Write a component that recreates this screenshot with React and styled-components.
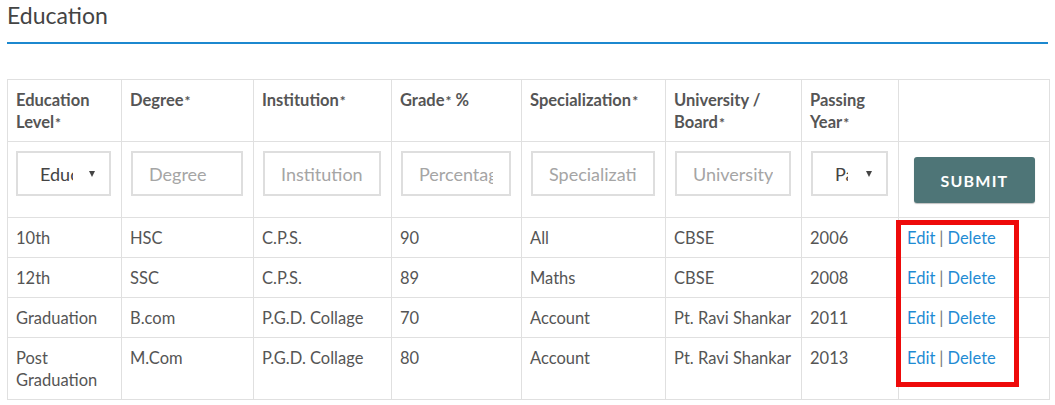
import React from 'react'
import styled, { createGlobalStyle } from 'styled-components'

const GlobalStyle = createGlobalStyle`
  body {
    margin: 0;
    background: #fff;
    font-family: Lato, "Open Sans", sans-serif;
    color: #555;
  }
`

const Page = styled.div`
  width: 1055px;
  padding: 0 7px;
  box-sizing: border-box;
`

const Heading = styled.h2`
  margin: 0;
  padding-top: 0;
  font-size: 23px;
  font-weight: 400;
  color: #444;
  line-height: 30px;
  height: 42px;
  border-bottom: 2px solid #1c88cf;
`

const TableWrap = styled.div`
  position: relative;
  margin-top: 35px;
`

const Table = styled.table`
  width: 1042px;
  border-collapse: collapse;
  table-layout: fixed;
`

const Th = styled.th`
  border: 1px solid #e0e0e0;
  padding: 9px 8px 8px 8px;
  text-align: left;
  vertical-align: top;
  font-size: 16.5px;
  line-height: 22px;
  font-weight: 700;
  color: #555;
`

const Req = styled.span`
  font-size: 14px;
  line-height: 1;
  margin-left: 1px;
`

const Td = styled.td`
  border: 1px solid #e0e0e0;
  padding: 9px 8px 8px 8px;
  vertical-align: top;
  font-size: 16.5px;
  line-height: 22px;
  color: #555;
`

const FormCell = styled.td`
  border: 1px solid #e0e0e0;
  padding: 9px 10px ${p => p.$bottom ?? 21}px ${p => p.$left || 9}px;
  vertical-align: top;
`

const TextInput = styled.input`
  display: block;
  width: 100%;
  height: 45px;
  box-sizing: border-box;
  border: 2px solid #dedede;
  border-radius: 0;
  padding: 0 16px 0 16px;
  font-family: Lato, sans-serif;
  font-size: 18px;
  color: #444;
  outline: none;
  &::placeholder {
    color: #a5a5a5;
  }
`

const SelectBox = styled.div`
  display: flex;
  align-items: center;
  height: 45px;
  box-sizing: border-box;
  border: 2px solid #dedede;
  padding: 0 10px 0 ${p => p.$pad}px;
  font-size: 18px;
  color: #444;
`

const SelectText = styled.span`
  width: ${p => p.$w}px;
  overflow: hidden;
  white-space: nowrap;
  flex: none;
`

const Arrow = styled.span`
  margin-left: auto;
  width: 0;
  height: 0;
  border-left: 3px solid transparent;
  border-right: 3px solid transparent;
  border-top: 6px solid #444;
  margin-right: 4px;
`

const SubmitButton = styled.button`
  display: block;
  margin: 6px 0 0 6px;
  width: 121px;
  height: 46px;
  border: none;
  border-radius: 3px;
  background: #4e7577;
  box-shadow: 0 1px 1px rgba(0, 0, 0, 0.25);
  color: #fff;
  font-family: Lato, sans-serif;
  font-weight: 700;
  font-size: 16px;
  letter-spacing: 1.2px;
`

const Link = styled.a`
  color: #1f8bd3;
  text-decoration: none;
`

const Sep = styled.span`
  color: #777;
  margin: 0 4px;
`

const Highlight = styled.div`
  position: absolute;
  left: 889px;
  top: 141px;
  width: 123px;
  height: 167px;
  border: 5px solid #ee0a0a;
  box-sizing: border-box;
  pointer-events: none;
`

const widths = [114, 132, 138, 130, 144, 136, 97, 151]

const rows = [
  ['10th', 'HSC', 'C.P.S.', '90', 'All', 'CBSE', '2006'],
  ['12th', 'SSC', 'C.P.S.', '89', 'Maths', 'CBSE', '2008'],
  ['Graduation', 'B.com', 'P.G.D. Collage', '70', 'Account', 'Pt. Ravi Shankar', '2011'],
  ['Post Graduation', 'M.Com', 'P.G.D. Collage', '80', 'Account', 'Pt. Ravi Shankar', '2013'],
]

const App = () => {
  return (
    <Page>
      <GlobalStyle />
      <Heading>Education</Heading>
      <TableWrap>
        <Table>
          <colgroup>
            {widths.map((w, i) => <col key={i} style={{ width: w }} />)}
          </colgroup>
          <thead>
            <tr>
              <Th>Education Level<Req>*</Req></Th>
              <Th>Degree<Req>*</Req></Th>
              <Th>Institution<Req>*</Req></Th>
              <Th>Grade<Req>*</Req> %</Th>
              <Th>Specialization<Req>*</Req></Th>
              <Th>University / Board<Req>*</Req></Th>
              <Th>Passing Year<Req>*</Req></Th>
              <Th />
            </tr>
          </thead>
          <tbody>
            <tr>
              <FormCell $left={8}>
                <SelectBox $pad={22}>
                  <SelectText $w={33}>Education Level</SelectText>
                  <Arrow />
                </SelectBox>
              </FormCell>
              <FormCell><TextInput placeholder="Degree" /></FormCell>
              <FormCell><TextInput placeholder="Institution" /></FormCell>
              <FormCell><TextInput placeholder="Percentage" /></FormCell>
              <FormCell><TextInput placeholder="Specialization" /></FormCell>
              <FormCell><TextInput placeholder="University" /></FormCell>
              <FormCell>
                <SelectBox $pad={22}>
                  <SelectText $w={13}>Passing Year</SelectText>
                  <Arrow />
                </SelectBox>
              </FormCell>
              <FormCell $bottom={0}>
                <SubmitButton>SUBMIT</SubmitButton>
              </FormCell>
            </tr>
            {rows.map((r, i) => (
              <tr key={i}>
                {r.map((c, j) => <Td key={j}>{c}</Td>)}
                <Td>
                  <Link href="#">Edit</Link>
                  <Sep>|</Sep>
                  <Link href="#">Delete</Link>
                </Td>
              </tr>
            ))}
          </tbody>
        </Table>
        <Highlight />
      </TableWrap>
    </Page>
  )
}

export default App
